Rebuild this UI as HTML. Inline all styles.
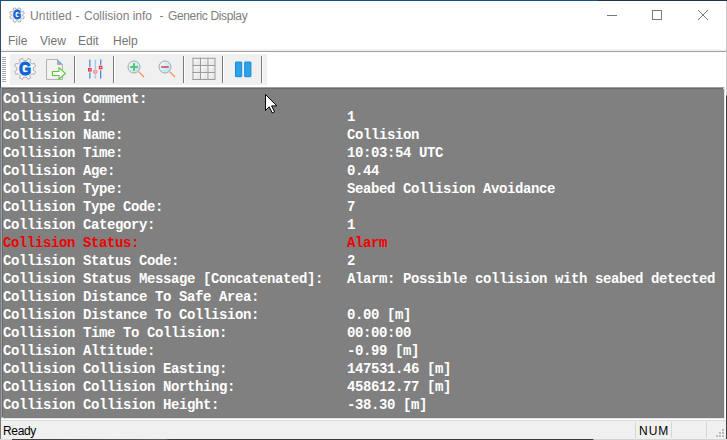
<!DOCTYPE html>
<html><head><meta charset="utf-8">
<style>
html,body{margin:0;padding:0;}
body{width:727px;height:440px;overflow:hidden;position:relative;background:#fff;font-family:"Liberation Sans",sans-serif;}
.a{position:absolute;}
.sans{font-family:"Liberation Sans",sans-serif;font-size:12px;line-height:14px;white-space:pre;}
#content{left:3px;top:89px;width:721px;height:329px;background:#808080;overflow:hidden;}
#txt{position:absolute;left:0;top:1px;font-family:"Liberation Mono",monospace;font-weight:bold;font-size:14px;letter-spacing:-0.4px;line-height:18px;color:#fff;white-space:pre;}
.red{color:#f20000;}
</style></head><body>
<!-- window borders -->
<div class="a" style="left:0;top:0;width:598px;height:1px;background:#135183"></div>
<div class="a" style="left:598px;top:0;width:129px;height:1px;background:#213445"></div>
<div class="a" style="left:0;top:1px;width:1px;height:439px;background:linear-gradient(#2f4d66 0,#2f4d66 86px,#7b7b7b 87px,#7b7b7b 100%)"></div>
<div class="a" style="left:726px;top:1px;width:1px;height:439px;background:linear-gradient(#c8c8c8 0,#c8c8c8 94px,#404040 95px,#404040 100%)"></div>

<!-- title bar -->
<svg class="a" style="left:0;top:0" width="30" height="30" viewBox="0 0 30 30">
  <path d="M17.79,9.26 L18.74,7.80 L21.01,8.77 L20.55,10.54 L21.66,11.65 L23.43,11.19 L24.40,13.46 L22.74,14.21 L22.74,15.79 L24.40,16.74 L23.43,19.01 L21.66,18.55 L20.55,19.66 L21.01,21.43 L18.74,22.40 L17.79,20.74 L16.21,20.74 L15.26,22.40 L12.99,21.43 L13.45,19.66 L12.34,18.55 L10.57,19.01 L9.60,16.74 L11.26,15.79 L11.26,14.21 L9.60,13.46 L10.57,11.19 L12.34,11.65 L13.45,10.54 L12.99,8.77 L15.26,7.80 L16.21,9.26Z" fill="#f4f4f4" stroke="#ababab" stroke-width="0.9"/>
  <text x="0" y="0" transform="translate(17.1,19.2) scale(0.86,1)" text-anchor="middle" font-family="Liberation Sans" font-weight="bold" font-size="12" fill="#1163d4" stroke="#1163d4" stroke-width="0.8">G</text>
</svg>
<div class="a sans" style="left:30px;top:9px;color:#7e7e7e;letter-spacing:0.15px">Untitled</div>
<div class="a sans" style="left:75.5px;top:9px;color:#7e7e7e">-</div>
<div class="a sans" style="left:84px;top:9px;color:#7e7e7e">Collision info</div>
<div class="a sans" style="left:159.5px;top:9px;color:#7e7e7e">-</div>
<div class="a sans" style="left:168px;top:9px;color:#7e7e7e;letter-spacing:-0.36px">Generic Display</div>
<!-- caption buttons -->
<div class="a" style="left:607px;top:15px;width:10px;height:1px;background:#7a7a7a"></div>
<div class="a" style="left:652px;top:10px;width:8px;height:8px;border:1px solid #7a7a7a"></div>
<svg class="a" style="left:697px;top:9px" width="12" height="12" viewBox="0 0 12 12"><path d="M1,1L11,11M11,1L1,11" stroke="#7a7a7a" stroke-width="1"/></svg>

<!-- menu -->
<div class="a sans" style="left:8px;top:34px;color:#747474">File</div>
<div class="a sans" style="left:40px;top:34px;color:#747474">View</div>
<div class="a sans" style="left:78px;top:34px;color:#747474">Edit</div>
<div class="a sans" style="left:113px;top:34px;color:#747474">Help</div>
<div class="a" style="left:1px;top:49px;width:725px;height:2px;background:#f2f2f2"></div>
<div class="a" style="left:1px;top:51px;width:725px;height:1px;background:#a0a0a0"></div>

<!-- toolbar -->
<div class="a" id="grip" style="left:2px;top:57px;width:4px;height:25px;background:repeating-linear-gradient(#a8a8a8 0,#a8a8a8 1px,transparent 1px,transparent 2px)"></div>
<div class="a" id="tb" style="left:10px;top:54px;width:257px;height:31px;background:#f0f0f0"></div>
<svg class="a" style="left:0;top:0" width="280" height="88" viewBox="0 0 280 88">
  <defs><linearGradient id="lens" x1="0" y1="0" x2="1" y2="1"><stop offset="0" stop-color="#f4fbff"/><stop offset="1" stop-color="#a8e4fa"/></linearGradient>
  <linearGradient id="cell" x1="0" y1="0" x2="1" y2="1"><stop offset="0" stop-color="#fbfbfb"/><stop offset="1" stop-color="#e2e2e2"/></linearGradient></defs>
  <!-- gear G -->
  <path d="M26.54,60.63 L27.79,58.44 L30.60,59.60 L29.93,62.03 L31.97,64.07 L34.40,63.40 L35.56,66.21 L33.37,67.46 L33.37,70.34 L35.56,71.59 L34.40,74.40 L31.97,73.73 L29.93,75.77 L30.60,78.20 L27.79,79.36 L26.54,77.17 L23.66,77.17 L22.41,79.36 L19.60,78.20 L20.27,75.77 L18.23,73.73 L15.80,74.40 L14.64,71.59 L16.83,70.34 L16.83,67.46 L14.64,66.21 L15.80,63.40 L18.23,64.07 L20.27,62.03 L19.60,59.60 L22.41,58.44 L23.66,60.63Z" fill="#f8f8f8" stroke="#9c9c9c" stroke-width="0.8"/>
  <text x="0" y="0" transform="translate(25.1,75.2) scale(0.84,1)" text-anchor="middle" font-family="Liberation Sans" font-weight="bold" font-size="18.5" fill="#0b66d4" stroke="#0b66d4" stroke-width="1.1">G</text>
  <!-- document -->
  <path d="M46.5,59.5 H57.5 L62.5,64.5 V79.5 H46.5 Z" fill="#f2f2f2" stroke="#acacac" stroke-width="0.9"/>
  <path d="M57.5,59.5 V64.5 H62.5 Z" fill="#6cb8e8" stroke="#a6a6a6" stroke-width="0.8"/>
  <path d="M52.5,71.5 H59 V67.8 L65.5,73.4 L59,79 V75.5 H52.5 Z" fill="#fff" stroke="#52cc3a" stroke-width="1.1" stroke-linejoin="miter"/>
  <!-- sep -->
  <rect x="74" y="56" width="1" height="27" fill="#7a7a7a"/><rect x="75" y="56" width="1" height="27" fill="#fff"/>
  <!-- sliders -->
  <rect x="89.2" y="59.5" width="1.3" height="7.8" fill="#4a8fdb"/><rect x="89.2" y="72.5" width="1.3" height="6" fill="#4a8fdb"/>
  <rect x="94.6" y="59.5" width="1.5" height="9.5" fill="#a9c8ec"/><rect x="94.6" y="74.6" width="1.5" height="3.9" fill="#a9c8ec"/>
  <rect x="100" y="59.5" width="1.3" height="5.5" fill="#4a8fdb"/><rect x="100" y="70.3" width="1.3" height="8.2" fill="#4a8fdb"/>
  <rect x="88" y="68" width="3.7" height="3.6" fill="#e63a4c"/><rect x="89.4" y="69.3" width="1" height="1" fill="#fff"/>
  <rect x="98.8" y="65.7" width="3.7" height="3.6" fill="#e63a4c"/><rect x="100.2" y="67" width="1" height="1" fill="#fff"/>
  <circle cx="95.3" cy="71.8" r="1.9" fill="#f6b5bd" stroke="#eb7080" stroke-width="0.7"/>
  <!-- sep -->
  <rect x="113" y="56" width="1" height="27" fill="#7a7a7a"/><rect x="114" y="56" width="1" height="27" fill="#fff"/>
  <!-- zoom in -->
  <line x1="138.6" y1="71.6" x2="144" y2="77" stroke="#f7894a" stroke-width="1.1"/>
  <circle cx="134" cy="67" r="6" fill="url(#lens)" stroke="#a8a8a8" stroke-width="1"/>
  <rect x="130.2" y="66" width="7.6" height="2" fill="#5ec26e"/><rect x="133" y="63.2" width="2" height="7.6" fill="#5ec26e"/>
  <!-- zoom out -->
  <line x1="169.6" y1="71.6" x2="175" y2="77" stroke="#f7894a" stroke-width="1.1"/>
  <circle cx="165" cy="67" r="6" fill="url(#lens)" stroke="#a8a8a8" stroke-width="1"/>
  <rect x="161.2" y="66" width="7.6" height="2" fill="#e26474"/>
  <!-- sep -->
  <rect x="183" y="56" width="1" height="27" fill="#7a7a7a"/><rect x="184" y="56" width="1" height="27" fill="#fff"/>
  <!-- grid -->
  <rect x="193.0" y="58.3" width="7.0" height="6.7" fill="url(#cell)"/><rect x="193.0" y="65.5" width="7.0" height="6.5" fill="url(#cell)"/><rect x="193.0" y="72.5" width="7.0" height="6.5" fill="url(#cell)"/><rect x="200.5" y="58.3" width="7.0" height="6.7" fill="url(#cell)"/><rect x="200.5" y="65.5" width="7.0" height="6.5" fill="url(#cell)"/><rect x="200.5" y="72.5" width="7.0" height="6.5" fill="url(#cell)"/><rect x="208.0" y="58.3" width="6.5" height="6.7" fill="url(#cell)"/><rect x="208.0" y="65.5" width="6.5" height="6.5" fill="url(#cell)"/><rect x="208.0" y="72.5" width="6.5" height="6.5" fill="url(#cell)"/>
  <rect x="192.5" y="57.8" width="1" height="22.2" fill="#9c9c9c"/><rect x="200.0" y="57.8" width="1" height="22.2" fill="#9c9c9c"/><rect x="207.5" y="57.8" width="1" height="22.2" fill="#9c9c9c"/><rect x="214.5" y="57.8" width="1" height="22.2" fill="#9c9c9c"/><rect x="192.5" y="57.8" width="22.5" height="1" fill="#9c9c9c"/><rect x="192.5" y="65.0" width="22.5" height="1" fill="#9c9c9c"/><rect x="192.5" y="72.0" width="22.5" height="1" fill="#9c9c9c"/><rect x="192.5" y="79.0" width="22.5" height="1" fill="#9c9c9c"/>
  <!-- sep -->
  <rect x="222" y="56" width="1" height="27" fill="#7a7a7a"/><rect x="223" y="56" width="1" height="27" fill="#fff"/>
  <!-- pause -->
  <rect x="235.5" y="62" width="6.2" height="14.7" rx="0.4" fill="#2aa4e8" stroke="#1b86dc" stroke-width="1"/>
  <rect x="244.7" y="62" width="6.2" height="14.7" rx="0.4" fill="#2aa4e8" stroke="#1b86dc" stroke-width="1"/>
  <!-- sep -->
  <rect x="261" y="56" width="1" height="27" fill="#7a7a7a"/><rect x="262" y="56" width="1" height="27" fill="#fff"/>
</svg>

<!-- content -->
<div class="a" style="left:1px;top:87px;width:725px;height:333px;background:#fff"></div>
<div class="a" style="left:1px;top:87px;width:724px;height:332px;background:#e3e3e3"></div>
<div class="a" style="left:1px;top:87px;width:723px;height:331px;background:#a0a0a0"></div>
<div class="a" style="left:2px;top:88px;width:722px;height:330px;background:#e3e3e3"></div>
<div class="a" style="left:2px;top:88px;width:721px;height:329px;background:#696969"></div>
<div class="a" id="content">
<div id="txt">Collision Comment:
Collision Id:                              1
Collision Name:                            Collision
Collision Time:                            10:03:54 UTC
Collision Age:                             0.44
Collision Type:                            Seabed Collision Avoidance
Collision Type Code:                       7
Collision Category:                        1
<span class="red">Collision Status:                          Alarm</span>
Collision Status Code:                     2
Collision Status Message [Concatenated]:   Alarm: Possible collision with seabed detected
Collision Distance To Safe Area:
Collision Distance To Collision:           0.00 [m]
Collision Time To Collision:               00:00:00
Collision Altitude:                        -0.99 [m]
Collision Collision Easting:               147531.46 [m]
Collision Collision Northing:              458612.77 [m]
Collision Collision Height:                -38.30 [m]</div>
</div>

<!-- status bar -->
<div class="a" style="left:1px;top:420px;width:725px;height:19px;background:linear-gradient(#dadada 0,#dadada 1px,#f0f0f0 1px)"></div>
<div class="a sans" style="left:3px;top:424px;color:#000;letter-spacing:-0.35px">Ready</div>
<div class="a" style="left:635px;top:422px;width:1px;height:16px;background:#d6d6d6"></div>
<div class="a sans" style="left:639px;top:424px;color:#000;letter-spacing:1px">NUM</div>
<div class="a" style="left:671px;top:422px;width:1px;height:16px;background:#d6d6d6"></div>
<div class="a" style="left:706px;top:422px;width:1px;height:16px;background:#d6d6d6"></div>
<div class="a" style="left:0;top:439px;width:727px;height:1px;background:linear-gradient(90deg,#dcdcdc 0,#dcdcdc 12px,#3c3c3c 12px,#5a5a5a 165px,#3a3a3a 170px,#3a3a3a 593px,#d4d4d4 594px,#d4d4d4 100%)"></div>
<!-- grip -->
<svg class="a" style="left:700px;top:420px" width="27" height="20" viewBox="700 420 27 20">
<g fill="#bcbcbc"><rect x="722" y="429" width="2" height="2"/><rect x="719" y="432" width="2" height="2"/><rect x="722" y="432" width="2" height="2"/><rect x="716" y="435" width="2" height="2"/><rect x="719" y="435" width="2" height="2"/><rect x="722" y="435" width="2" height="2"/></g>
</svg>
<!-- cursor -->
<svg class="a" style="left:262px;top:91px" width="20" height="26" viewBox="262 91 20 26">
<path d="M265.5,94.5 V110.5 L269.2,106.8 L272.3,113 L274.6,111.9 L271.6,105.9 L276.8,105.9 Z" fill="#fff" stroke="#000" stroke-width="1" stroke-linejoin="miter"/>
</svg>
</body></html>
